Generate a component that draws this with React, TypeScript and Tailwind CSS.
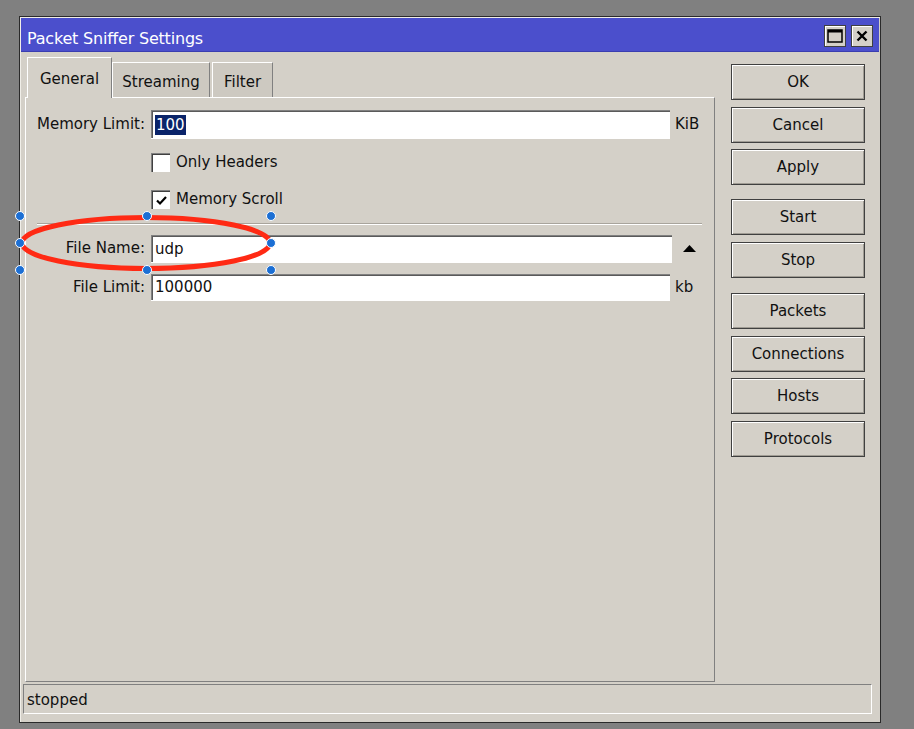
import React from 'react'

const font = { fontFamily: '"DejaVu Sans", Verdana, sans-serif' }

function Btn({ label, className = '' }: { label: string; className?: string }) {
  return (
    <div
      className={`h-[36px] w-[134px] flex items-center justify-center border border-[#404040] bg-[#d4d0c8] text-[15px] text-[#111] shadow-[inset_1px_1px_0_#ffffff,inset_-1px_-1px_0_#a09c94] ${className}`}
    >
      {label}
    </div>
  )
}

function Field({ value, selected, className = '' }: { value: string; selected?: boolean; className?: string }) {
  return (
    <div
      className={`flex items-center bg-white border-t border-l border-[#808080] border-b-[#ffffff] border-r-[#ffffff] shadow-[inset_1px_1px_0_#5a5a5a,0_1px_0_#ffffff] pl-[3px] text-[15px] text-[#111] ${className}`}
    >
      {selected ? <span className="bg-[#0a246a] text-white px-px leading-[20px]">{value}</span> : <span>{value}</span>}
    </div>
  )
}

function Check({ checked, label }: { checked?: boolean; label: string }) {
  return (
    <div className="flex items-center h-[19px]">
      <div className="w-[19px] h-[19px] bg-white border-t border-l border-[#808080] shadow-[inset_1px_1px_0_#404040] flex items-center justify-center">
        {checked && (
          <svg width="13" height="13" viewBox="0 0 13 13">
            <path d="M2 6.5 L5 9.5 L11 3" fill="none" stroke="#000" strokeWidth="2.2" />
          </svg>
        )}
      </div>
      <span className="ml-[6px] text-[15px] text-[#111]">{label}</span>
    </div>
  )
}

export default function App() {
  const handles = [
    [20, 216], [147, 216], [271, 216],
    [20, 243], [271, 243],
    [20, 270], [147, 270], [271, 270],
  ]

  return (
    <div className="relative w-[914px] h-[729px] bg-[#808080] overflow-hidden pt-[16px] pl-[19px]" style={font}>
      <div className="w-[862px] h-[707px] border border-[#2a2a2a] bg-[#d4d0c8] p-px flex flex-col shadow-[inset_1px_1px_0_#f0eee8]">
        {/* title bar */}
        <div className="h-[34px] bg-[#4b4fcc] flex items-center pl-[6px] pr-[6px] border-b border-[#3a3db0]">
          <span className="text-white text-[16px] tracking-[-0.2px] flex-1 mt-[9px]">Packet Sniffer Settings</span>
          <div className="flex gap-[5px] mt-[3px]">
            <div className="w-[22px] h-[22px] bg-[#d4d0c8] border border-[#404040] shadow-[inset_1px_1px_0_#fff] flex items-center justify-center">
              <svg width="16" height="14" viewBox="0 0 16 14">
                <rect x="1" y="1" width="14" height="12" fill="none" stroke="#000" strokeWidth="1.5" />
                <rect x="1" y="1" width="14" height="2.5" fill="#000" />
              </svg>
            </div>
            <div className="w-[22px] h-[22px] bg-[#d4d0c8] border border-[#404040] shadow-[inset_1px_1px_0_#fff] flex items-center justify-center">
              <svg width="12" height="12" viewBox="0 0 12 12">
                <path d="M1.5 1.5 L10.5 10.5 M10.5 1.5 L1.5 10.5" stroke="#000" strokeWidth="2.4" />
              </svg>
            </div>
          </div>
        </div>

        {/* body */}
        <div className="flex pl-[4px] pt-[5px]">
          <div className="w-[690px] flex flex-col">
            <div className="h-[40px] flex items-end">
              <div className="relative z-10 ml-[2px] w-[85px] h-[41px] -mb-px bg-[#d4d0c8] border-t border-l border-white border-r border-r-[#808080] flex items-center justify-center text-[15px] text-[#111] pt-[3px]">
                General
              </div>
              <div className="w-[98px] h-[35px] bg-[#cdc9c1] border-t border-l border-white border-r border-r-[#808080] flex items-center justify-center text-[15px] text-[#111] pt-[4px]">
                Streaming
              </div>
              <div className="ml-[2px] w-[61px] h-[35px] bg-[#cdc9c1] border-t border-l border-white border-r border-r-[#808080] flex items-center justify-center text-[15px] text-[#111] pt-[4px]">
                Filter
              </div>
            </div>
            <div className="h-[585px] border border-t-white border-l-white border-r-[#808080] border-b-[#808080] flex flex-col pt-[12px]">
              <div className="flex items-center h-[28px]">
                <span className="w-[119px] text-right text-[15px] text-[#111]">Memory Limit:</span>
                <Field value="100" selected className="ml-[6px] w-[519px] h-[28px]" />
                <span className="ml-[5px] text-[15px] text-[#111]">KiB</span>
              </div>
              <div className="ml-[125px] mt-[15px]">
                <Check label="Only Headers" />
              </div>
              <div className="ml-[125px] mt-[18px]">
                <Check checked label="Memory Scroll" />
              </div>
              <div className="ml-[11px] mr-[12px] mt-[14px] h-[2px] border-t border-[#a8a49c] border-b border-b-white" />
              <div className="flex items-center h-[27px] mt-[10px]">
                <span className="w-[119px] text-right text-[15px] text-[#111]">File Name:</span>
                <Field value="udp" className="ml-[6px] w-[521px] h-[27px]" />
                <svg className="ml-[11px]" width="13" height="7" viewBox="0 0 13 7">
                  <path d="M6.5 0 L13 7 L0 7 Z" fill="#000" />
                </svg>
              </div>
              <div className="flex items-center h-[26px] mt-[12px]">
                <span className="w-[119px] text-right text-[15px] text-[#111]">File Limit:</span>
                <Field value="100000" className="ml-[6px] w-[519px] h-[26px]" />
                <span className="ml-[5px] text-[15px] text-[#111]">kb</span>
              </div>
            </div>
          </div>

          <div className="ml-[16px] pt-[7px] flex flex-col">
            <Btn label="OK" />
            <Btn label="Cancel" className="mt-[7px]" />
            <Btn label="Apply" className="mt-[6px]" />
            <Btn label="Start" className="mt-[14px]" />
            <Btn label="Stop" className="mt-[7px]" />
            <Btn label="Packets" className="mt-[15px]" />
            <Btn label="Connections" className="mt-[7px]" />
            <Btn label="Hosts" className="mt-[6px]" />
            <Btn label="Protocols" className="mt-[7px]" />
          </div>
        </div>

        {/* status bar */}
        <div className="ml-[2px] mt-[2px] w-[849px] h-[30px] border border-t-[#808080] border-l-[#808080] border-r-white border-b-white flex items-center pl-[3px] pt-[2px] text-[15px] text-[#111]">
          stopped
        </div>
      </div>

      {/* annotation overlay */}
      <svg className="absolute left-0 top-0 pointer-events-none" width="914" height="729">
        <ellipse cx="146" cy="243" rx="124" ry="25.5" fill="none" stroke="#ff2a14" strokeWidth="5" />
        {handles.map(([x, y], i) => (
          <circle key={i} cx={x} cy={y} r="4.5" fill="#1c6fd4" stroke="#ffffff" strokeWidth="1" />
        ))}
      </svg>
    </div>
  )
}
